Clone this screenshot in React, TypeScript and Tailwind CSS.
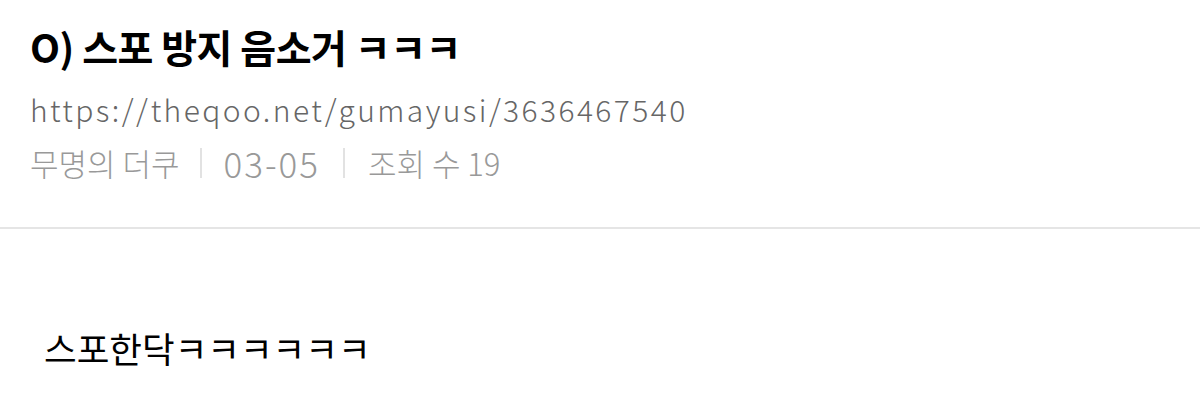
export default function App() {
  const font = { fontFamily: '"Noto Sans CJK KR", "Noto Sans", sans-serif' };
  return (
    <div className="w-[1200px] h-[418px] bg-white overflow-hidden" style={font}>
      <div className="pl-[30px] pt-[16px] pb-[39px] border-b-2 border-[#e5e5e5]">
        <h1 className="text-[39px] leading-[60px] font-bold text-black tracking-[-0.5px]">O) 스포 방지 음소거 ㅋㅋㅋ</h1>
        <div className="text-[30px] leading-[44px] font-light text-[#666] mt-[11px] tracking-[2.4px]">https://theqoo.net/gumayusi/3636467540</div>
        <div className="flex items-center text-[31px] leading-[50px] font-light text-[#999] mt-[7px]">
          <span>무명의 더쿠</span>
          <span className="mx-[21px] w-[2px] h-[30px] bg-[#e2e2e2]" />
          <span className="text-[35px] tracking-[2px]">03-05</span>
          <span className="mx-[23px] w-[2px] h-[30px] bg-[#e2e2e2]" />
          <span>조회 수 19</span>
        </div>
      </div>
      <div className="pl-[44px] pt-[94px] text-[35.5px] leading-[50px] text-black">스포한닥ㅋㅋㅋㅋㅋㅋ</div>
    </div>
  );
}
